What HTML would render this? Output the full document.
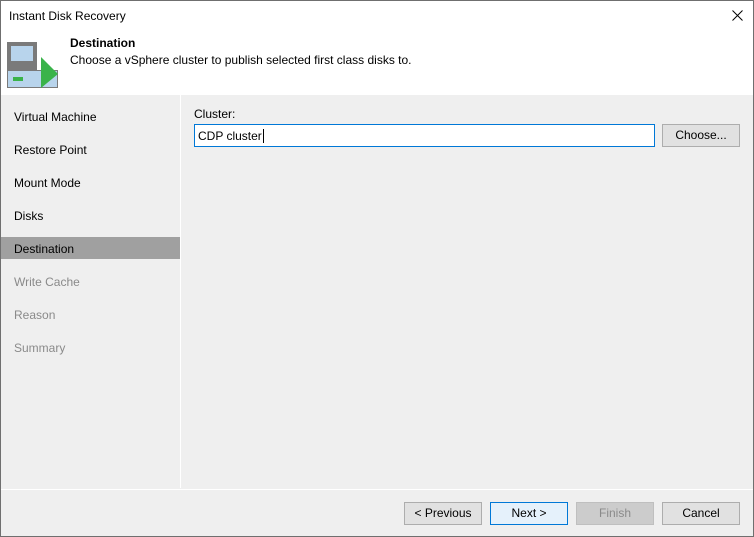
<!DOCTYPE html>
<html><head><style>
*{margin:0;padding:0;box-sizing:border-box}
body{width:754px;height:537px;overflow:hidden;font-family:"Liberation Sans",sans-serif;font-size:12px;color:#000;background:#efefef;position:relative}
.frame{position:absolute;left:0;top:0;width:754px;height:537px;border:1px solid #6f6f6f;z-index:5;pointer-events:none}
.title{position:absolute;left:0;top:0;width:754px;height:31px;background:#fff;}
.title span{position:absolute;left:9px;top:9px}
.hdr{position:absolute;left:0;top:31px;width:754px;height:64px;background:#fff}
.h1{position:absolute;left:70px;top:5px;font-weight:bold}
.h2{position:absolute;left:70px;top:22px}
.nav{position:absolute;left:0;top:95px;width:180px;height:393px}
.nav div{height:33px;line-height:33px;padding-left:14px}
.nav .sel{background:linear-gradient(#efefef 0,#efefef 4px,#a0a0a0 4px,#a0a0a0 26px,#efefef 26px)}
.nav .dis{color:#8a8a8a}
.vs{position:absolute;left:180px;top:95px;width:1px;height:393px;background:#fff}
.hs{position:absolute;left:0;top:489px;width:754px;height:1px;background:#fff}
.lbl{position:absolute;left:194px;top:107px}
.inp{position:absolute;left:194px;top:124px;width:461px;height:23px;border:1px solid #0078d7;background:#fff;padding:4px 3px}
.btn{position:absolute;height:23px;border:1px solid #adadad;background:#e1e1e1;text-align:center;line-height:21px}
</style></head><body>
<div class="frame"></div>
<div class="title"><span>Instant Disk Recovery</span>
<svg style="position:absolute;left:732px;top:10px" width="11" height="11"><path d="M0.5 0.5L10.5 10.5M10.5 0.5L0.5 10.5" stroke="#000" stroke-width="1"/></svg></div>
<div class="hdr">
<svg style="position:absolute;left:0;top:0" width="64" height="64">
<rect x="7" y="11" width="30" height="28" fill="#7a7a7a"/>
<rect x="11" y="15" width="22" height="15" fill="#b8d4ec"/>
<rect x="7.5" y="39.5" width="50" height="17" fill="#b8d4ec" stroke="#7a7a7a" stroke-width="1"/>
<rect x="13" y="46" width="10" height="4" fill="#3ab34a"/>
<polygon points="41,26 58,43 41,57" fill="#3ab34a"/>
</svg>
<div class="h1">Destination</div>
<div class="h2">Choose a vSphere cluster to publish selected first class disks to.</div>
</div>
<div class="nav">
<div style="margin-top:6px">Virtual Machine</div><div>Restore Point</div><div>Mount Mode</div><div>Disks</div>
<div class="sel">Destination</div><div class="dis">Write Cache</div><div class="dis">Reason</div><div class="dis">Summary</div>
</div>
<div class="vs"></div><div class="hs"></div>
<div class="lbl">Cluster:</div>
<div class="inp">CDP cluster<span style="border-left:1px solid #000;margin-left:1px"></span></div>
<div class="btn" style="left:662px;top:124px;width:78px">Choose...</div>
<div class="btn" style="left:404px;top:502px;width:78px">&lt; Previous</div>
<div class="btn" style="left:490px;top:502px;width:78px;border-color:#0078d7;background:#e5f1fb">Next &gt;</div>
<div class="btn" style="left:576px;top:502px;width:78px;background:#cccccc;border-color:#bfbfbf;color:#8a8a8a">Finish</div>
<div class="btn" style="left:662px;top:502px;width:78px">Cancel</div>
</body></html>
